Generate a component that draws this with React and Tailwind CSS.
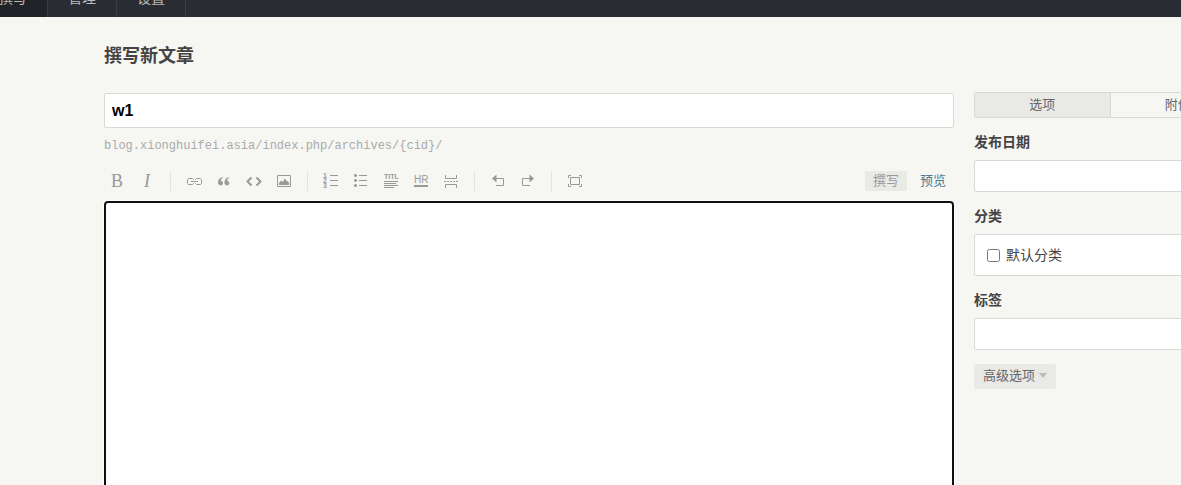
import { useState } from "react";
import clsx from "clsx";

const NAV_ITEMS = [
  { label: "撰写", className: "flex w-12 justify-end pr-5 bg-[#202328]" },
  { label: "管理", className: "px-5" },
  { label: "设置", className: "px-5" },
];

const TOOLS = [
  [
    { name: "粗体", icon: BoldIcon },
    { name: "斜体", icon: ItalicIcon },
  ],
  [
    { name: "链接", icon: LinkIcon },
    { name: "引用", icon: QuoteIcon },
    { name: "代码", icon: CodeIcon },
    { name: "图片", icon: ImageIcon },
  ],
  [
    { name: "数字列表", icon: OrderedListIcon },
    { name: "普通列表", icon: BulletListIcon },
    { name: "标题", icon: HeadingIcon },
    { name: "分割线", icon: RuleIcon },
    { name: "摘要分割线", icon: MoreIcon },
  ],
  [
    { name: "撤销", icon: UndoIcon },
    { name: "重做", icon: RedoIcon },
  ],
  [{ name: "全屏", icon: FullscreenIcon }],
];

function Icon({ children }) {
  return (
    <svg
      viewBox="0 0 20 20"
      className="size-5"
      fill="none"
      stroke="#999999"
      aria-hidden="true"
    >
      {children}
    </svg>
  );
}

function BoldIcon() {
  return (
    <span className="font-['Liberation_Serif',serif] text-lg leading-5 text-[#999999]">
      B
    </span>
  );
}

function ItalicIcon() {
  return (
    <span className="font-['Liberation_Serif',serif] text-lg italic leading-5 text-[#999999]">
      I
    </span>
  );
}

function LinkIcon() {
  return (
    <Icon>
      <path d="M9.5 9V8.5L8.5 7.5H4.5L3.5 8.5V12.5L4.5 13.5H8.5L9.5 12.5V12M11.5 9V8.5L12.5 7.5H16.5L17.5 8.5V12.5L16.5 13.5H12.5L11.5 12.5V12M7 10.5H14" />
    </Icon>
  );
}

function QuoteIcon() {
  return (
    <Icon>
      <path
        d="M9 6C6 6.5 4 8.6 4 11.6C4 13.3 5 14.4 6.6 14.4C8 14.4 9 13.5 9 12.1C9 10.8 8.1 9.9 6.8 9.9C6.9 8.6 7.6 7.4 9 6.6ZM15.4 6C12.4 6.5 10.4 8.6 10.4 11.6C10.4 13.3 11.4 14.4 13 14.4C14.4 14.4 15.4 13.5 15.4 12.1C15.4 10.8 14.5 9.9 13.2 9.9C13.3 8.6 14 7.4 15.4 6.6Z"
        fill="#999999"
        stroke="none"
      />
    </Icon>
  );
}

function CodeIcon() {
  return (
    <Icon>
      <path d="M7.5 6.5L3.5 10.5L7.5 14.5M12.5 6.5L16.5 10.5L12.5 14.5" strokeWidth="2" />
    </Icon>
  );
}

function ImageIcon() {
  return (
    <Icon>
      <path d="M3.5 4.5H16.5V15.5H3.5Z" />
      <path d="M5 14V12L7 9.5L8.5 11L11 7.5L13 10.5L14 10L15 12V14Z" fill="#999999" stroke="none" />
    </Icon>
  );
}

function OrderedListIcon() {
  return (
    <Icon>
      <g
        fill="#999999"
        stroke="none"
        fontSize="7"
        fontWeight="700"
        fontFamily="Liberation Sans, sans-serif"
      >
        <text x="2" y="7">1</text>
        <text x="2" y="12">2</text>
        <text x="2" y="17">3</text>
      </g>
      <path d="M9 4.5H17M9 9.5H17M9 14.5H17" />
    </Icon>
  );
}

function BulletListIcon() {
  return (
    <Icon>
      <path d="M3 4.5H6M3 9.5H6M3 14.5H6" strokeWidth="2" />
      <path d="M4.5 3V6M4.5 8V11M4.5 13V16M8 4.5H16M8 9.5H16M8 14.5H16" />
    </Icon>
  );
}

function HeadingIcon() {
  return (
    <Icon>
      <text
        x="3"
        y="8"
        fill="#999999"
        stroke="none"
        fontSize="7"
        fontWeight="700"
        fontFamily="Liberation Sans, sans-serif"
      >
        TITL
      </text>
      <path d="M3 10.5H17M3 12.5H15M3 14.5H17M3 16.5H13" />
    </Icon>
  );
}

function RuleIcon() {
  return (
    <Icon>
      <text
        x="3"
        y="12"
        fill="#999999"
        stroke="none"
        fontSize="10"
        fontFamily="Liberation Sans, sans-serif"
      >
        HR
      </text>
      <path d="M3 15H17" strokeWidth="2" />
    </Icon>
  );
}

function MoreIcon() {
  return (
    <Icon>
      <path d="M4.5 4V7.5H15.5V4M4.5 17V13.5H15.5V17" />
      <path d="M3 10.5H17" strokeDasharray="2 1" />
    </Icon>
  );
}

function UndoIcon() {
  return (
    <Icon>
      <path d="M8 7.5H15.5V14.5H8" />
      <path d="M4 7.5L8.5 3.5V11.5Z" fill="#999999" stroke="none" />
    </Icon>
  );
}

function RedoIcon() {
  return (
    <Icon>
      <path d="M12 7.5H4.5V14.5H12" />
      <path d="M16 7.5L11.5 3.5V11.5Z" fill="#999999" stroke="none" />
    </Icon>
  );
}

function FullscreenIcon() {
  return (
    <Icon>
      <path d="M5.5 6.5H14.5V13.5H5.5ZM3.5 7V4.5H6M14 4.5H16.5V7M16.5 13V15.5H14M6 15.5H3.5V13" />
    </Icon>
  );
}

function TopNav() {
  return (
    <nav className="flex h-[17px] items-end overflow-hidden bg-[#292d33]">
      {NAV_ITEMS.map((item) => (
        <a
          key={item.label}
          href="#"
          className={clsx(
            "h-[38px] shrink-0 whitespace-nowrap border-r border-[#383d45] text-sm leading-9 text-[#bbbbbb]",
            item.className
          )}
        >
          {item.label}
        </a>
      ))}
    </nav>
  );
}

function Toolbar({ preview, onPreview }) {
  const tab = "flex h-5 rounded-[1px] px-2 text-[13px] leading-[18px]";

  return (
    <div className="mt-4 flex h-5 items-center justify-between">
      <div className="-ml-0.5 flex">
        {TOOLS.map((group, index) => (
          <div key={group[0].name} className="flex">
            {index > 0 && <span className="mx-2 h-5 w-px bg-[#e3e3e0]" />}
            {group.map(({ name, icon: ToolIcon }) => (
              <button
                key={name}
                type="button"
                aria-label={name}
                className="flex h-5 w-[30px] items-center justify-center"
              >
                <ToolIcon />
              </button>
            ))}
          </div>
        ))}
      </div>
      <div className="flex gap-[5px]">
        <button
          type="button"
          onClick={() => onPreview(false)}
          className={clsx(tab, preview ? "text-[#467b96]" : "bg-[#e9e9e6] text-[#999999]")}
        >
          撰写
        </button>
        <button
          type="button"
          onClick={() => onPreview(true)}
          className={clsx(tab, preview ? "bg-[#e9e9e6] text-[#999999]" : "text-[#467b96]")}
        >
          预览
        </button>
      </div>
    </div>
  );
}

function Sidebar() {
  const label = "block text-sm font-bold leading-[18px]";
  const box = "w-full rounded-[2px] border border-[#d9d9d6] bg-white";

  return (
    <aside className="-mr-[65px] w-[272px] shrink-0">
      <div className="-mt-px flex h-[26px] overflow-hidden rounded-[2px] border border-[#d9d9d6] text-[13px] text-[#666666]">
        <button type="button" className="flex-1 border-r border-[#d9d9d6] bg-[#e9e9e6] pb-0.5">
          选项
        </button>
        <button type="button" className="flex-1 pb-0.5">
          附件
        </button>
      </div>

      <label htmlFor="date" className={clsx(label, "mt-3.5")}>
        发布日期
      </label>
      <input id="date" type="text" className={clsx(box, "mt-2.5 block h-8 px-2")} />

      <fieldset className="mt-3.5">
        <legend className={label}>分类</legend>
        <div className={clsx(box, "mt-2.5 flex h-[42px] items-center px-3")}>
          <input id="category" type="checkbox" className="size-[13px]" />
          <label htmlFor="category" className="pb-0.5 pl-1.5 text-sm leading-5">
            默认分类
          </label>
        </div>
      </fieldset>

      <label htmlFor="tags" className={clsx(label, "mt-3.5")}>
        标签
      </label>
      <input id="tags" type="text" className={clsx(box, "mt-2.5 block h-8 px-2")} />

      <button
        type="button"
        className="mt-3.5 flex h-[25px] items-center gap-1 rounded-[2px] bg-[#e9e9e6] px-[9px] pb-[3px] text-[13px] leading-5 text-[#666666]"
      >
        高级选项
        <svg viewBox="0 0 8 5" className="h-[5px] w-2" aria-hidden="true">
          <path d="M0 0H8L4 5Z" fill="#bbbbbb" />
        </svg>
      </button>
    </aside>
  );
}

export default function App() {
  const [title, setTitle] = useState("w1");
  const [preview, setPreview] = useState(false);

  return (
    <div className="flex h-screen flex-col overflow-hidden bg-[#f6f6f3] font-['Noto_Sans_CJK_SC',sans-serif] text-[#444444]">
      <TopNav />
      <main className="flex min-h-0 flex-1 flex-col pl-[104px]">
        <h1 className="mt-6 text-lg font-bold leading-[26px]">撰写新文章</h1>
        <div className="mt-[26px] flex min-h-0 flex-1 gap-5">
          <section className="flex min-w-0 flex-1 flex-col">
            <input
              type="text"
              aria-label="标题"
              value={title}
              onChange={(event) => setTitle(event.target.value)}
              className="block h-[35px] w-full shrink-0 rounded-[2px] border border-[#d9d9d6] bg-white px-[7px] font-['Liberation_Sans',sans-serif] text-base font-bold text-black"
            />
            <p className="mt-[9px] font-['Liberation_Mono',monospace] text-xs leading-[18px] text-[#aaaaaa]">
              blog.xionghuifei.asia/index.php/archives/{"{cid}"}/
            </p>
            <Toolbar preview={preview} onPreview={setPreview} />
            <textarea
              aria-label="内容"
              className="mt-2.5 -mb-2 block min-h-0 w-full flex-1 resize-none rounded-[4px] border-2 border-[#101010] bg-white p-2 outline-none ring-1 ring-white"
            />
          </section>
          <Sidebar />
        </div>
      </main>
    </div>
  );
}
